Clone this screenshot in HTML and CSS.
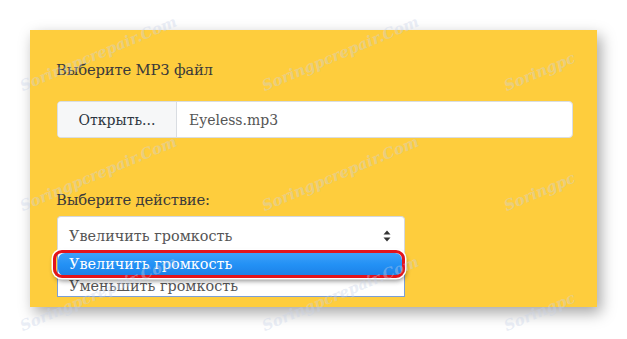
FILE: index.html
```html
<!DOCTYPE html>
<html lang="ru">
<head>
<meta charset="utf-8">
<link rel="stylesheet" href="styles.css">
</head>
<body>
<div class="stage">
  <div class="panel">
    <div class="label first">Выберите MP3 файл</div>
    <div class="file-group">
      <div class="file-btn">Открыть...</div>
      <div class="file-name">Eyeless.mp3</div>
    </div>
    <div class="label second">Выберите действие:</div>
    <div class="select-wrap">
      <div class="select">
        <span>Увеличить громкость</span>
        <svg class="arrows" width="8" height="12" viewBox="0 0 8 12"><path d="M4 0.5 L7.5 4.5 L0.5 4.5 Z M4 11.5 L7.5 7.5 L0.5 7.5 Z" fill="#333"/></svg>
      </div>
      <div class="dropdown">
        <div class="opt active">Увеличить громкость</div>
        <div class="opt">Уменьшить громкость</div>
      </div>
      <div class="mark"></div>
    </div>
  </div>
  <div class="wm" style="left:24px;top:94px">Soringpcrepair.Com</div>
  <div class="wm" style="left:266px;top:94px">Soringpcrepair.Com</div>
  <div class="wm" style="left:508px;top:94px">Soringpc</div>
  <div class="wm" style="left:24px;top:214px">Soringpcrepair.Com</div>
  <div class="wm" style="left:266px;top:214px">Soringpcrepair.Com</div>
  <div class="wm" style="left:508px;top:214px">Soringpc</div>
  <div class="wm" style="left:24px;top:334px">Soringpcrepair.Com</div>
  <div class="wm" style="left:266px;top:334px">Soringpcrepair.Com</div>
  <div class="wm" style="left:508px;top:334px">Soringpc</div>
</div>
</body>
</html>
```
FILE: styles.css
```css
html, body {
  margin: 0;
  padding: 0;
  background: #ffffff;
}
body {
  font-family: "DejaVu Serif", "Liberation Serif", serif;
  width: 627px;
  height: 339px;
  overflow: hidden;
}
.stage {
  position: relative;
  width: 627px;
  height: 339px;
  padding-top: 30px;
  box-sizing: border-box;
  overflow: hidden;
}
.panel {
  margin-left: 30px;
  width: 567px;
  height: 277px;
  box-sizing: border-box;
  background: #fecd3d;
  padding: 30px 24px 0 27px;
  box-shadow: 4px 6px 14px rgba(0,0,0,0.35);
}
.label {
  font-size: 14.8px;
  line-height: 20px;
  color: #3a3a3a;
  letter-spacing: -0.2px;
  margin-left: -1px;
}
.label.second {
  margin-top: 52px;
}
.file-group {
  margin-top: 21px;
  display: flex;
  height: 37px;
  box-sizing: border-box;
  border: 1px solid #d9dde2;
  border-radius: 4px;
  background: #ffffff;
  overflow: hidden;
}
.file-btn {
  width: 118px;
  background: #f6f7f8;
  border-right: 1px solid #d9dde2;
  display: flex;
  align-items: center;
  justify-content: center;
  font-size: 14px;
  color: #2c3440;
}
.file-name {
  display: flex;
  align-items: center;
  padding-left: 12px;
  font-size: 14px;
  color: #555;
}
.select-wrap {
  position: relative;
  margin-top: 6px;
  width: 348px;
}
.select {
  height: 38px;
  box-sizing: border-box;
  border: 1px solid #d4d8de;
  border-bottom: none;
  border-radius: 4px 4px 0 0;
  background: #ffffff;
  display: flex;
  align-items: center;
  justify-content: space-between;
  padding: 0 13px 0 11px;
  font-size: 14.4px;
  color: #555;
}
.arrows {
  display: block;
}
.dropdown {
  position: absolute;
  left: 0;
  top: 37px;
  width: 348px;
  height: 44px;
  box-sizing: border-box;
  background: #ffffff;
  border: 1px solid #7b9fd6;
  border-top: none;
  overflow: hidden;
}
.opt {
  height: 18px;
  line-height: 19px;
  padding-left: 11px;
  font-size: 14.4px;
  color: #555;
}
.opt.active {
  margin: 0 2px 1px 0;
  height: 23px;
  line-height: 23px;
  border-radius: 7px;
  background: linear-gradient(#3ea1fa, #2391f5 50%, #1b80e8);
  color: #ffffff;
}
.mark {
  position: absolute;
  left: -4px;
  top: 34px;
  width: 346px;
  height: 22px;
  border: 3px solid #e3141c;
  border-radius: 9px;
  box-shadow: 0 0 0 1.5px #ffffff, 1px 3px 5px rgba(0,0,0,0.45);
}
.wm {
  position: absolute;
  font-family: "DejaVu Serif", serif;
  font-style: italic;
  font-weight: bold;
  font-size: 15px;
  color: rgba(200, 210, 232, 0.4);
  transform: rotate(-23deg);
  transform-origin: left bottom;
  white-space: nowrap;
  pointer-events: none;
  line-height: 16px;
  margin-top: -16px;
}
```
